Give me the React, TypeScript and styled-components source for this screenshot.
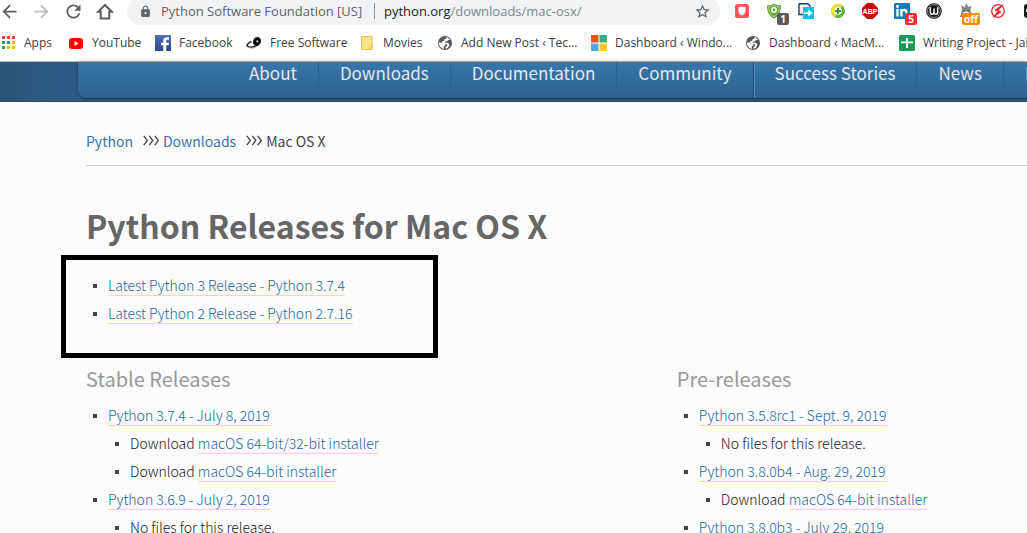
import React from "react";
import styled, { createGlobalStyle } from "styled-components";
import { MdArrowBack, MdArrowForward, MdRefresh, MdLock, MdStarBorder } from "react-icons/md";

const siteFont = `"Noto Sans CJK SC", "Open Sans", sans-serif`;
const chromeFont = `"Open Sans", "Noto Sans", sans-serif`;

const Global = createGlobalStyle`
  * { box-sizing: border-box; }
  body { margin: 0; background: #fcfcfc; }
`;

const Page = styled.div`
  height: 100vh;
  overflow: hidden;
  font-family: ${siteFont};
  font-size: 14px;
  line-height: 28px;
  color: #444;
`;

/* Browser toolbar */

const Browser = styled.div`
  background: #fff;
  border-bottom: 1px solid #b9b9b7;
  font-family: ${chromeFont};
`;

const Toolbar = styled.div`
  display: flex;
  align-items: flex-end;
  height: 25px;
  margin: 0 -19px 0 -7px;
`;

const IconButton = styled.button<{ $faded?: boolean }>`
  flex: none;
  display: flex;
  align-items: center;
  justify-content: center;
  width: 32px;
  height: 28px;
  padding: 0;
  border: 0;
  background: none;
  color: ${(p) => (p.$faded ? "#bababa" : "#5a5d61")};
`;

const AddressBar = styled.div`
  flex: 1;
  display: flex;
  align-items: center;
  height: 28px;
  margin: 0 6px;
  padding: 0 2px 0 12px;
  border-radius: 14px;
  background: #f1f3f4;
  font-size: 13px;
  line-height: 20px;
  color: #5f6368;
`;

const Owner = styled.span`
  width: 213px;
  margin-left: 9px;
  white-space: nowrap;
`;

const Url = styled.span`
  flex: 1;
  padding-left: 9px;
  white-space: nowrap;
  color: #80868b;
  border-left: 1px solid #909498;
  line-height: 16px;
`;

const Host = styled.span`
  color: #202124;
`;

const ExtensionButton = styled(IconButton)`
  position: relative;
`;

const Badge = styled.span<{ $color: string; $wide?: boolean }>`
  position: absolute;
  right: ${(p) => (p.$wide ? 2 : 1)}px;
  bottom: 0;
  min-width: ${(p) => (p.$wide ? 18 : 12)}px;
  height: 12px;
  border-radius: 2px;
  background: ${(p) => p.$color};
  color: #fff;
  font: bold 10px/12px ${chromeFont};
  text-align: center;
`;

const Bookmarks = styled.nav`
  display: flex;
  align-items: center;
  height: 36px;
  overflow: hidden;
`;

const Bookmark = styled.a<{ $width: number }>`
  flex: 0 0 ${(p) => p.$width}px;
  display: flex;
  align-items: center;
  gap: 8px;
  font-size: 12px;
  line-height: 16px;
  color: #3c4043;
  text-decoration: none;
  white-space: nowrap;

  svg { flex: none; }
`;

/* Site header */

const Header = styled.header`
  display: flex;
  padding: 0 0 3px 78px;
  background: linear-gradient(90deg, #295478 0, #2b5b84 60px);
  border-bottom: 1px solid #3f4347;
`;

const NavPanel = styled.nav`
  flex: 1;
  min-width: 0;
  display: flex;
  padding-left: 150px;
  overflow: hidden;
  border-bottom-left-radius: 8px;
  background: linear-gradient(#3776ab, #2d618c);
  box-shadow: 0 1px 1px #1b3a58, 0 0 5px rgba(0, 0, 0, 0.25);
`;

const NavLink = styled.a<{ $strong?: boolean }>`
  flex: none;
  padding: 0 21px 14px;
  border-right: 1px solid ${(p) => (p.$strong ? "#1f4b72" : "#2d618c")};
  box-shadow: ${(p) => (p.$strong ? "1px 0 0 #5390c0" : "none")};
  font-size: 17px;
  line-height: 22px;
  color: #e6e8ea;
  text-decoration: none;
`;

/* Page content */

const Main = styled.main`
  padding: 24px 0 0 86px;
`;

const Breadcrumbs = styled.nav`
  display: flex;
  align-items: center;
  height: 40px;
  padding-bottom: 10px;
  border-bottom: 1px solid #caccce;

  svg { margin: 0 3px 0 10px; }
`;

const CrumbLink = styled.a`
  color: #3776ab;
  text-decoration: none;
`;

const Title = styled.h1`
  margin: 35px 0 6px;
  font-size: 32px;
  line-height: 48px;
  font-weight: 700;
  color: #666;
`;

const Highlight = styled.section`
  width: 377px;
  height: 103px;
  margin-left: -25px;
  padding: 12px 20px;
  border: 5px solid #000;
`;

const Columns = styled.div`
  display: grid;
  grid-template-columns: minmax(0, 27fr) minmax(0, 16fr);
`;

const ColumnTitle = styled.h2`
  margin: 6px 0 8px;
  font-size: 20px;
  line-height: 30px;
  font-weight: 400;
  color: #999;
`;

const List = styled.ul`
  margin: 0;
  padding: 0;
  list-style: none;
  font-weight: 300;
  color: #222;

  & & { padding-left: 22px; }
`;

const Row = styled.div`
  display: flex;
  align-items: center;
  height: 28px;
  white-space: pre;

  &::before {
    content: "";
    width: 4px;
    height: 4px;
    margin: 0 11px 0 7px;
    background: #444;
  }
`;

const Text = styled.span`
  height: 20px;
  line-height: 19px;
`;

const TextLink = styled.a`
  height: 20px;
  line-height: 19px;
  color: #2467a0;
  text-decoration: none;
  border-bottom: 1px solid #ffdf76;
`;

const HomeIcon = () => (
  <svg width="18" height="18" viewBox="0 0 18 18" fill="none" stroke="currentColor" strokeWidth="2">
    <path d="M2.200 9.800H4.700v6.700h8.600V9.800h2.500L9 3z" />
  </svg>
);

const Chevrons = () => (
  <svg width="17" height="11" viewBox="0 0 17 11" fill="none" stroke="#444" strokeWidth="1.3">
    <path d="M.8.8 4.300 5.500.8 10.200M6.300.8l3.500 4.700-3.500 4.700M11.800.8l3.500 4.700-3.500 4.700" />
  </svg>
);

const AppsIcon = () => (
  <svg width="16" height="16" viewBox="0 0 16 16">
    <path fill="#ea4335" d="M2 1h3v3H2zM7 1h3v3H7zM12 1h3v3h-3z" />
    <path fill="#34a059" d="M2 6h3v3H2zM2 11h3v3H2z" />
    <path fill="#2f80ed" d="M7 6h3v3H7z" />
    <path fill="#f9b50b" d="M12 6h3v3h-3zM7 11h3v3H7zM12 11h3v3h-3z" />
  </svg>
);

const YouTubeIcon = () => (
  <svg width="16" height="16" viewBox="0 0 16 16">
    <rect x="1" y="3" width="14" height="11" rx="3" fill="#f00" />
    <path d="M6.500 6v5l4-2.500z" fill="#fff" />
  </svg>
);

const FacebookIcon = () => (
  <svg width="16" height="16" viewBox="0 0 16 16">
    <defs>
      <linearGradient id="fb" x1="0" y1="0" x2="0" y2="1">
        <stop stopColor="#5470b5" />
        <stop offset="1" stopColor="#2b4890" />
      </linearGradient>
    </defs>
    <path d="M0 0h16v16H0z" fill="url(#fb)" />
    <path d="M8.300 16v-5.800H6V7.700h2.300V5.800C8.300 3.400 9.700 2.200 12 2.200h2v2.600h-1.400c-1.100 0-1.400.5-1.400 1.400v1.500H14l-.4 2.500h-2.400V16z" fill="#fff" />
  </svg>
);

const FreeSoftwareIcon = () => (
  <svg width="16" height="16" viewBox="0 0 16 16" fill="none">
    <ellipse cx="11" cy="6.500" rx="3.800" ry="4.600" fill="#000" transform="rotate(20 11 6.500)" />
    <circle cx="11.300" cy="6.400" r="1.200" fill="#bbb" />
    <path d="M5.500 6.500C2 8 .5 10 1.500 11.300c1.300 1.400 5.500 1 9-.8" stroke="#222" strokeWidth="1.500" />
    <path d="M3 12.500c2 .8 4.500.5 6.500-.5" stroke="#888" />
  </svg>
);

const NoteIcon = () => (
  <svg width="16" height="16" viewBox="0 0 16 16">
    <path d="M2.500 1.500h10.500v9.500l-2 3.500H2.500z" fill="#ffe38c" stroke="#e8c34c" />
    <path d="M11 14.500v-3.500c0-1 2.500-1 2.500 0v2.500c0 .6-.4 1-1 1z" fill="#ffe38c" stroke="#e8c34c" />
  </svg>
);

const GlobeIcon = () => (
  <svg width="16" height="16" viewBox="0 0 16 16">
    <circle cx="8" cy="8" r="7" fill="#54585d" />
    <path d="M1.800 7.500h3l1.500 1.600h2v1.600H6.800v3.200C4 13.200 2 11 1.800 7.500zM9.200 2.200c1.800.3 3.200 1.300 4 2.800H11L9.800 6.400H7.900v1.300h3l1.300 1.500v1.600c-.7 1.600-2 2.700-3.700 3v-1.600l2-1.900-1-1.200H6.600L5.300 7.600V6h1.900l.4-1.900h1.600z" fill="#fff" />
  </svg>
);

const WindowsIcon = () => (
  <svg width="16" height="16" viewBox="0 0 16 16">
    <path fill="#f4511e" d="M0 0h7.500v7.500H0z" />
    <path fill="#34b27a" d="M8.500 0H16v7.500H8.500z" />
    <path fill="#4fa9dc" d="M0 8.500h7.500V16H0z" />
    <path fill="#ffc52a" d="M8.500 8.500H16V16H8.500z" />
  </svg>
);

const SheetsIcon = () => (
  <svg width="16" height="16" viewBox="0 0 16 16">
    <rect width="16" height="16" rx="1.500" fill="#159d58" />
    <path d="M7 3h2v3.500h5v1.700H9V13H7V8.200H2V6.500h5z" fill="#fff" />
  </svg>
);

const PocketIcon = () => (
  <svg width="16" height="16" viewBox="0 0 16 16">
    <rect x="1" y="1" width="14" height="14" rx="2.500" fill="#f0575c" />
    <path d="M4.500 4.300c1.400 0 2.500-.2 3.500-.8 1 .6 2.100.8 3.500.8v3.900c0 2-1.500 3.400-3.500 4.300-2-.9-3.500-2.300-3.500-4.300z" fill="#fff" />
  </svg>
);

const ShieldIcon = () => (
  <svg width="16" height="16" viewBox="0 0 16 16">
    <path d="M8 .5c2 1.300 4.200 1.800 7 1.800 0 6-1.500 10.700-7 13.200C2.500 13 1 8.300 1 2.300c2.800 0 5-.5 7-1.800z" fill="#63a636" />
    <path d="M8 2.300c1.600 1 3.300 1.400 5.300 1.500-.2 4.500-1.500 7.800-5.300 9.900-3.800-2.100-5.100-5.400-5.300-9.900 2-.1 3.700-.5 5.300-1.500z" fill="none" stroke="#b9d98c" />
    <circle cx="8" cy="7" r="2.200" fill="none" stroke="#fff" strokeWidth="1.500" />
  </svg>
);

const TransferIcon = () => (
  <svg width="16" height="16" viewBox="0 0 16 16">
    <path d="M1 .7h9L12 3v2M1 .7v10.800h4" fill="none" stroke="#173f61" strokeWidth="1.400" />
    <path d="M5 4h11v12H5z" fill="#00c3ea" />
    <path d="M6 9.200h4V6.400l4.500 3.700-4.500 3.700V11H6z" fill="#fff" />
  </svg>
);

const PlusIcon = () => (
  <svg width="16" height="16" viewBox="0 0 16 16">
    <circle cx="8" cy="8" r="7" fill="#5cb531" />
    <path d="M1 8a7 7 0 0 1 11.500-5.400L5 14.200C2.500 13 1 10.500 1 8z" fill="#f5dc29" />
    <circle cx="8" cy="8" r="3.800" fill="#fff" />
    <path d="M7 5h2v2h2v2H9v2H7V9H5V7h2z" fill="#2c9447" />
  </svg>
);

const AbpIcon = () => (
  <svg width="16" height="16" viewBox="0 0 16 16">
    <path d="M5 0h6l5 5v6l-5 5H5l-5-5V5z" fill="#c70d12" />
    <text x="8" y="11" textAnchor="middle" fontFamily="Liberation Sans, sans-serif" fontWeight="700" fontSize="7" fill="#fff">ABP</text>
  </svg>
);

const LinkedInIcon = () => (
  <svg width="16" height="16" viewBox="0 0 16 16">
    <rect width="16" height="16" rx="1" fill="#1679b8" />
    <path d="M2.300 6h2.300v7.500H2.300zM6.200 6h2.200v1c1.200-1.800 5.200-1.700 5.200 1.900v4.600h-2.300V9.400c0-2-2.700-2-2.700 0v4.100H6.200z" fill="#fff" />
    <circle cx="3.450" cy="3.500" r="1.400" fill="#fff" />
  </svg>
);

const WIcon = () => (
  <svg width="16" height="16" viewBox="0 0 16 16" fill="none">
    <circle cx="8" cy="8" r="7.800" fill="#151515" />
    <circle cx="8" cy="8" r="6.400" stroke="#ddd" strokeWidth=".6" />
    <path d="M4.300 4.300v4.700c0 3 3.400 3 3.700 0V5.500M8 5.500V9c.3 3 3.700 3 3.700 0V4.300" stroke="#fff" strokeWidth="1.500" />
  </svg>
);

const CatIcon = () => (
  <svg width="16" height="16" viewBox="0 0 16 16">
    <path d="M2 14 4 7.500 3.500 2l3 2.500L8.500 0l1.800 4.300L13 2.500 12.500 8 15 14z" fill="#858585" />
    <path d="M5 9c1.500-1 4.500-1 6 0l-1 4H6z" fill="#eee" />
    <path d="M5.500 8h1.500M9.500 8H11" stroke="#333" />
  </svg>
);

const FlashIcon = () => (
  <svg width="16" height="16" viewBox="0 0 16 16">
    <circle cx="8" cy="8" r="6.300" fill="#fff" stroke="#e5282d" strokeWidth="1.300" />
    <path d="M12.800 1.500 5 7.200l2.800 1-4.600 6.300L11 8.800l-2.800-1z" fill="#e5282d" stroke="#e5282d" strokeWidth=".8" />
  </svg>
);

const DarkIcon = () => (
  <svg width="16" height="16" viewBox="0 0 16 16">
    <rect x="2" y="1" width="14" height="14" rx="3" fill="#1b1b1b" />
    <path d="M4 6h8v3H4z" fill="#ddd" />
  </svg>
);

const extensions: { name: string; icon: React.ReactNode; badge?: string; color?: string }[] = [
  { name: "Pocket", icon: <PocketIcon /> },
  { name: "Shield", icon: <ShieldIcon />, badge: "1", color: "#5a5a5a" },
  { name: "Transfer", icon: <TransferIcon /> },
  { name: "Add", icon: <PlusIcon /> },
  { name: "Adblock Plus", icon: <AbpIcon /> },
  { name: "LinkedIn", icon: <LinkedInIcon />, badge: "5", color: "#fa2d37" },
  { name: "W", icon: <WIcon /> },
  { name: "Cat", icon: <CatIcon />, badge: "off", color: "#ff8c00" },
  { name: "Flash", icon: <FlashIcon /> },
  { name: "Reader", icon: <DarkIcon /> },
];

const bookmarks: { label: string; icon: React.ReactNode; width: number }[] = [
  { label: "Apps", icon: <AppsIcon />, width: 68 },
  { label: "YouTube", icon: <YouTubeIcon />, width: 87 },
  { label: "Facebook", icon: <FacebookIcon />, width: 91 },
  { label: "Free Software", icon: <FreeSoftwareIcon />, width: 113 },
  { label: "Movies", icon: <NoteIcon />, width: 78 },
  { label: "Add New Post ‹ Tec...", icon: <GlobeIcon />, width: 154 },
  { label: "Dashboard ‹ Windo...", icon: <WindowsIcon />, width: 154 },
  { label: "Dashboard ‹ MacM...", icon: <GlobeIcon />, width: 154 },
  { label: "Writing Project - Jai", icon: <SheetsIcon />, width: 154 },
];

const navItems = ["About", "Downloads", "Documentation", "Community", "Success Stories", "News", "Events"];

type File = { text: string; link?: string };
type Release = { title: string; files: File[] };

const none: File[] = [{ text: "No files for this release." }];

const stable: Release[] = [
  {
    title: "Python 3.7.4 - July 8, 2019",
    files: [
      { text: "Download ", link: "macOS 64-bit/32-bit installer" },
      { text: "Download ", link: "macOS 64-bit installer" },
    ],
  },
  { title: "Python 3.6.9 - July 2, 2019", files: none },
];

const pre: Release[] = [
  { title: "Python 3.5.8rc1 - Sept. 9, 2019", files: none },
  { title: "Python 3.8.0b4 - Aug. 29, 2019", files: [{ text: "Download ", link: "macOS 64-bit installer" }] },
  { title: "Python 3.8.0b3 - July 29, 2019", files: [] },
];

const ReleaseColumn = ({ title, releases }: { title: string; releases: Release[] }) => (
  <section>
    <ColumnTitle>{title}</ColumnTitle>
    <List>
      {releases.map((release) => (
        <li key={release.title}>
          <Row><TextLink href="#">{release.title}</TextLink></Row>
          {release.files.length > 0 && (
            <List>
              {release.files.map((file, i) => (
                <li key={i}>
                  <Row>
                    <Text>{file.text}</Text>
                    {file.link && <TextLink href="#">{file.link}</TextLink>}
                  </Row>
                </li>
              ))}
            </List>
          )}
        </li>
      ))}
    </List>
  </section>
);

export default function App() {
  return (
    <Page>
      <Global />
      <Browser>
        <Toolbar>
          <IconButton aria-label="Back"><MdArrowBack size={21} /></IconButton>
          <IconButton aria-label="Forward" $faded><MdArrowForward size={21} /></IconButton>
          <IconButton aria-label="Reload"><MdRefresh size={21} /></IconButton>
          <IconButton aria-label="Home"><HomeIcon /></IconButton>
          <AddressBar>
            <MdLock size={13} />
            <Owner>Python Software Foundation [US]</Owner>
            <Url><Host>python.org</Host>/downloads/mac-osx/</Url>
            <IconButton aria-label="Bookmark this page"><MdStarBorder size={17} /></IconButton>
          </AddressBar>
          {extensions.map((ext) => (
            <ExtensionButton key={ext.name} aria-label={ext.name}>
              {ext.icon}
              {ext.badge && <Badge $color={ext.color!} $wide={ext.badge.length > 1}>{ext.badge}</Badge>}
            </ExtensionButton>
          ))}
        </Toolbar>
        <Bookmarks>
          {bookmarks.map((b) => (
            <Bookmark key={b.label} href="#" $width={b.width}>
              {b.icon}
              {b.label}
            </Bookmark>
          ))}
        </Bookmarks>
      </Browser>
      <Header>
        <NavPanel>
          {navItems.map((item) => (
            <NavLink key={item} href="#" $strong={item === "Community"}>{item}</NavLink>
          ))}
        </NavPanel>
      </Header>
      <Main>
        <Breadcrumbs>
          <CrumbLink href="#">Python</CrumbLink>
          <Chevrons />
          <CrumbLink href="#">Downloads</CrumbLink>
          <Chevrons />
          <span>Mac OS X</span>
        </Breadcrumbs>
        <Title>Python Releases for Mac OS X</Title>
        <Highlight>
          <List>
            <li><Row><TextLink href="#">Latest Python 3 Release - Python 3.7.4</TextLink></Row></li>
            <li><Row><TextLink href="#">Latest Python 2 Release - Python 2.7.16</TextLink></Row></li>
          </List>
        </Highlight>
        <Columns>
          <ReleaseColumn title="Stable Releases" releases={stable} />
          <ReleaseColumn title="Pre-releases" releases={pre} />
        </Columns>
      </Main>
    </Page>
  );
}
